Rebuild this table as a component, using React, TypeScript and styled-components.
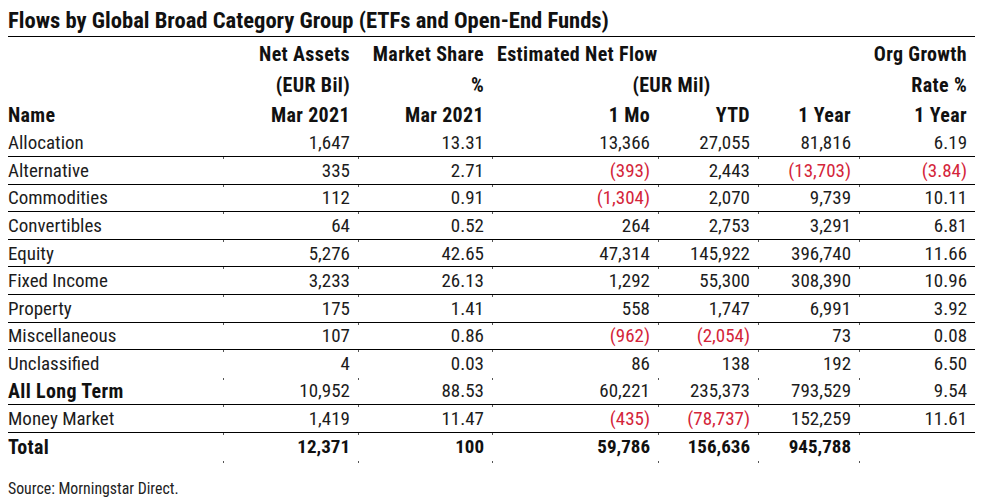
import styled, { createGlobalStyle } from "styled-components";

type Row = {
  name: string;
  values: string[];
  bold?: boolean;
  line?: boolean;
};

const rows: Row[] = [
  { name: "Allocation", values: ["1,647", "13.31", "13,366", "27,055", "81,816", "6.19"], line: true },
  { name: "Alternative", values: ["335", "2.71", "(393)", "2,443", "(13,703)", "(3.84)"], line: true },
  { name: "Commodities", values: ["112", "0.91", "(1,304)", "2,070", "9,739", "10.11"], line: true },
  { name: "Convertibles", values: ["64", "0.52", "264", "2,753", "3,291", "6.81"], line: true },
  { name: "Equity", values: ["5,276", "42.65", "47,314", "145,922", "396,740", "11.66"], line: true },
  { name: "Fixed Income", values: ["3,233", "26.13", "1,292", "55,300", "308,390", "10.96"], line: true },
  { name: "Property", values: ["175", "1.41", "558", "1,747", "6,991", "3.92"], line: true },
  { name: "Miscellaneous", values: ["107", "0.86", "(962)", "(2,054)", "73", "0.08"], line: true },
  { name: "Unclassified", values: ["4", "0.03", "86", "138", "192", "6.50"] },
  { name: "All Long Term", values: ["10,952", "88.53", "60,221", "235,373", "793,529", "9.54"], line: true, bold: true },
  { name: "Money Market", values: ["1,419", "11.47", "(435)", "(78,737)", "152,259", "11.61"], line: true },
];

const total = ["12,371", "100", "59,786", "156,636", "945,788", ""];

const widths = [215, 135, 134, 166, 100, 101, 116];

const GlobalStyle = createGlobalStyle`
  body {
    margin: 0;
    background: #fff;
    font-family: "Roboto Condensed", "Roboto", sans-serif;
    font-stretch: 75%;
    color: #1c1c1c;
  }
`;

const Page = styled.div`
  width: 967px;
  padding: 0 6px 0 8px;
`;

const Title = styled.h2`
  margin: 0;
  height: 36px;
  line-height: 41px;
  font-size: 22.6px;
  font-weight: 700;
  color: #111;
  border-bottom: 1px solid #000;
  white-space: nowrap;
`;

const Table = styled.table`
  border-collapse: collapse;
  table-layout: fixed;
  width: 967px;
  font-size: 19px;
`;

const HeadRow = styled.tr<{ $h: number }>`
  height: ${(p) => p.$h}px;
`;

const HeadCell = styled.th<{ $align?: string }>`
  padding: 0 8px 0 0;
  font-size: 20px;
  letter-spacing: 0.35px;
  font-weight: 700;
  color: #111;
  text-align: ${(p) => p.$align || "right"};
  white-space: nowrap;
  vertical-align: middle;
`;

const BodyRow = styled.tr<{ $line?: boolean; $h?: number }>`
  height: ${(p) => p.$h || 27.6}px;
  border-bottom: ${(p) => (p.$line ? "1px solid #000" : "none")};
`;

const NameCell = styled.td<{ $bold?: boolean }>`
  padding: 0;
  text-align: left;
  white-space: nowrap;
  font-size: ${(p) => (p.$bold ? "20px" : "19px")};
  letter-spacing: ${(p) => (p.$bold ? "0.35px" : "0")};
  font-weight: ${(p) => (p.$bold ? 700 : 400)};
  color: ${(p) => (p.$bold ? "#111" : "#1c1c1c")};
`;

const Cell = styled.td<{ $neg?: boolean; $bold?: boolean }>`
  position: relative;
  padding: 0 8px 0 0;
  text-align: right;
  white-space: nowrap;
  font-weight: ${(p) => (p.$bold ? 700 : 400)};
  color: ${(p) => (p.$neg ? "#d4253a" : p.$bold ? "#111" : "#1c1c1c")};

  &::before {
    content: "";
    position: absolute;
    left: 0;
    bottom: -3px;
    width: 1px;
    height: 2px;
    background: #555;
  }
`;

const Source = styled.div`
  margin-top: 19px;
  font-size: 15.8px;
  color: #222;
`;

export default function App() {
  return (
    <Page>
      <GlobalStyle />
      <Title>Flows by Global Broad Category Group (ETFs and Open-End Funds)</Title>
      <Table>
        <colgroup>
          {widths.map((w, i) => (
            <col key={i} style={{ width: w }} />
          ))}
        </colgroup>
        <thead>
          <HeadRow $h={33}>
            <HeadCell />
            <HeadCell>Net Assets</HeadCell>
            <HeadCell>Market Share</HeadCell>
            <HeadCell $align="left" colSpan={3} style={{ paddingLeft: 5 }}>
              Estimated Net Flow
            </HeadCell>
            <HeadCell>Org Growth</HeadCell>
          </HeadRow>
          <HeadRow $h={30}>
            <HeadCell />
            <HeadCell>(EUR Bil)</HeadCell>
            <HeadCell>%</HeadCell>
            <HeadCell $align="center" colSpan={3}>
              (EUR Mil)
            </HeadCell>
            <HeadCell>Rate %</HeadCell>
          </HeadRow>
          <HeadRow $h={29}>
            <HeadCell $align="left">Name</HeadCell>
            <HeadCell>Mar 2021</HeadCell>
            <HeadCell>Mar 2021</HeadCell>
            <HeadCell>1 Mo</HeadCell>
            <HeadCell>YTD</HeadCell>
            <HeadCell>1 Year</HeadCell>
            <HeadCell>1 Year</HeadCell>
          </HeadRow>
        </thead>
        <tbody>
          {rows.map((r) => (
            <BodyRow key={r.name} $line={r.line}>
              <NameCell $bold={r.bold}>{r.name}</NameCell>
              {r.values.map((v, i) => (
                <Cell key={i} $neg={v.startsWith("(")}>
                  {v}
                </Cell>
              ))}
            </BodyRow>
          ))}
          <BodyRow>
            <NameCell $bold>Total</NameCell>
            {total.map((v, i) => (
              <Cell key={i} $bold>
                {v}
              </Cell>
            ))}
          </BodyRow>
        </tbody>
      </Table>
      <Source>Source: Morningstar Direct.</Source>
    </Page>
  );
}
